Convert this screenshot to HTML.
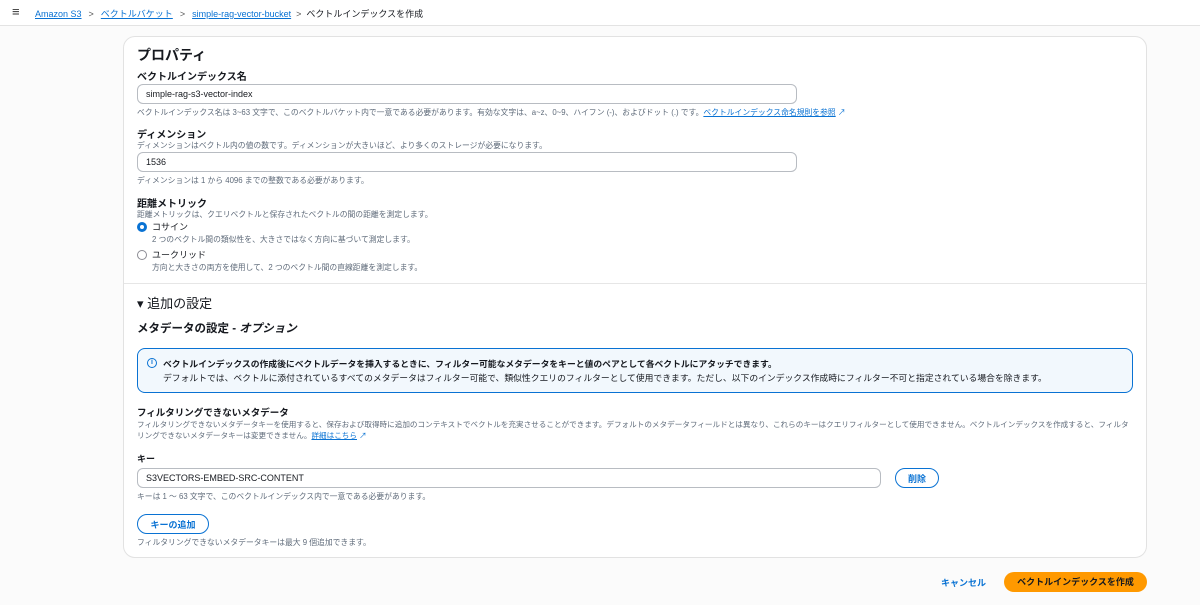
<!DOCTYPE html>
<html><head><meta charset="utf-8"><style>
*{margin:0;padding:0;box-sizing:border-box}
body{width:1200px;height:605px;background:#fbfbfb;font-family:"Liberation Sans","Noto Sans CJK JP",sans-serif;color:#16191f;position:relative;overflow:hidden}
.a{position:absolute;white-space:nowrap}
.top{position:absolute;left:0;top:0;width:1200px;height:26px;background:#fff;border-bottom:1px solid #e3e3e3}
.lk{color:#0972d3;text-decoration:underline}
.card{position:absolute;left:123px;top:36px;width:1024px;height:522px;background:#fff;border:1px solid #e2e2e2;border-radius:12px}
.lab{font-size:10px;font-weight:bold}
.d{font-size:7.8px;color:#5f6b7a}
.inp{position:absolute;height:20px;border:1px solid #b8bcc2;border-radius:6px;background:#fff;font-size:9px;padding:0 8px;line-height:18px}
.btn{position:absolute;border:1.5px solid #0972d3;border-radius:12px;color:#0972d3;font-size:9px;font-weight:bold;text-align:center;display:flex;align-items:center;justify-content:center}
</style></head><body>
<div class="top">
<div class="a" style="left:12px;top:4px;font-size:13px;color:#333">≡</div>
<div class="a" style="left:35px;top:7px;font-size:9px"><span class="lk">Amazon S3</span><span style="color:#555;margin:0 7px">&gt;</span><span class="lk">ベクトルバケット</span><span style="color:#555;margin:0 7px">&gt;</span><span class="lk">simple-rag-vector-bucket</span><span style="color:#555;margin:0 5px">&gt;</span><span>ベクトルインデックスを作成</span></div>
</div>
<div class="card"></div>
<div class="a" style="left:137px;top:45px;font-size:14px;font-weight:bold">プロパティ</div>
<div class="a lab" style="left:137px;top:68px">ベクトルインデックス名</div>
<div class="inp" style="left:137px;top:84px;width:660px">simple-rag-s3-vector-index</div>
<div class="a d" style="left:137px;top:107px">ベクトルインデックス名は 3~63 文字で、このベクトルバケット内で一意である必要があります。有効な文字は、a~z、0~9、ハイフン (-)、およびドット (.) です。<span class="lk">ベクトルインデックス命名規則を参照</span> <span style="color:#0972d3">↗</span></div>
<div class="a lab" style="left:137px;top:126px">ディメンション</div>
<div class="a d" style="left:137px;top:140px">ディメンションはベクトル内の値の数です。ディメンションが大きいほど、より多くのストレージが必要になります。</div>
<div class="inp" style="left:137px;top:152px;width:660px">1536</div>
<div class="a d" style="left:137px;top:175px">ディメンションは 1 から 4096 までの整数である必要があります。</div>
<div class="a lab" style="left:137px;top:195px">距離メトリック</div>
<div class="a d" style="left:137px;top:209px">距離メトリックは、クエリベクトルと保存されたベクトルの間の距離を測定します。</div>
<div class="a" style="left:137px;top:222px;width:10px;height:10px;border:3px solid #0972d3;border-radius:50%"></div>
<div class="a" style="left:152px;top:220px;font-size:9px">コサイン</div>
<div class="a d" style="left:152px;top:234px">2 つのベクトル間の類似性を、大きさではなく方向に基づいて測定します。</div>
<div class="a" style="left:137px;top:250px;width:10px;height:10px;border:1px solid #8c8c94;border-radius:50%"></div>
<div class="a" style="left:152px;top:248px;font-size:9px">ユークリッド</div>
<div class="a d" style="left:152px;top:262px">方向と大きさの両方を使用して、2 つのベクトル間の直線距離を測定します。</div>
<div class="a" style="left:124px;top:283px;width:1022px;height:1px;background:#e6e6e6"></div>
<div class="a" style="left:137px;top:293px;font-size:13px">▾ 追加の設定</div>
<div class="a" style="left:137px;top:320px;font-size:11.5px;font-weight:bold">メタデータの設定 - <i>オプション</i></div>
<div class="a" style="left:137px;top:348px;width:996px;height:45px;border:1.5px solid #0972d3;border-radius:8px;background:#f2f8fd"></div>
<div class="a" style="left:147px;top:358px;width:10px;height:10px;border:1px solid #0972d3;border-radius:50%;font-size:7px;color:#0972d3;text-align:center;line-height:8px;font-weight:bold">i</div>
<div class="a" style="left:163px;top:357px;font-size:8.8px;font-weight:bold">ベクトルインデックスの作成後にベクトルデータを挿入するときに、フィルター可能なメタデータをキーと値のペアとして各ベクトルにアタッチできます。</div>
<div class="a" style="left:163px;top:371px;font-size:8.8px">デフォルトでは、ベクトルに添付されているすべてのメタデータはフィルター可能で、類似性クエリのフィルターとして使用できます。ただし、以下のインデックス作成時にフィルター不可と指定されている場合を除きます。</div>
<div class="a lab" style="left:137px;top:405px;font-size:9.5px">フィルタリングできないメタデータ</div>
<div class="a d" style="left:137px;top:419px;font-size:7.6px">フィルタリングできないメタデータキーを使用すると、保存および取得時に追加のコンテキストでベクトルを充実させることができます。デフォルトのメタデータフィールドとは異なり、これらのキーはクエリフィルターとして使用できません。ベクトルインデックスを作成すると、フィルタ</div>
<div class="a d" style="left:137px;top:430px;font-size:7.6px">リングできないメタデータキーは変更できません。<span class="lk">詳細はこちら</span> <span style="color:#0972d3">↗</span></div>
<div class="a lab" style="left:137px;top:452px;font-size:9px">キー</div>
<div class="inp" style="left:137px;top:468px;width:744px">S3VECTORS-EMBED-SRC-CONTENT</div>
<div class="btn" style="left:895px;top:468px;width:44px;height:20px">削除</div>
<div class="a d" style="left:137px;top:491px">キーは 1 ～ 63 文字で、このベクトルインデックス内で一意である必要があります。</div>
<div class="btn" style="left:137px;top:514px;width:72px;height:20px">キーの追加</div>
<div class="a d" style="left:137px;top:537px">フィルタリングできないメタデータキーは最大 9 個追加できます。</div>
<div class="a" style="left:941px;top:576px;font-size:9px;font-weight:bold;color:#0972d3">キャンセル</div>
<div class="a" style="left:1004px;top:572px;width:143px;height:20px;border-radius:10px;background:#ff9900;font-size:9px;font-weight:bold;text-align:center;line-height:20px">ベクトルインデックスを作成</div>
</body></html>
